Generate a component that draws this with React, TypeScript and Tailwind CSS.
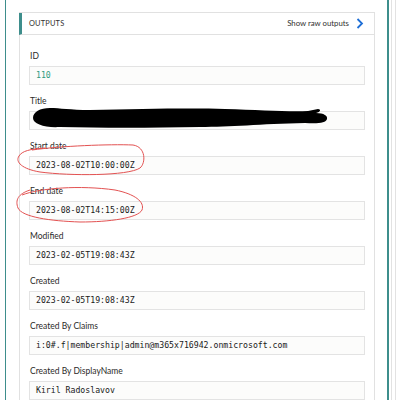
import React from 'react';

type Field = { label: string; value: string; tone?: 'id' | 'hidden' };

const fields: Field[] = [
  { label: 'ID', value: '110', tone: 'id' },
  { label: 'Title', value: '', tone: 'hidden' },
  { label: 'Start date', value: '2023-08-02T10:00:00Z' },
  { label: 'End date', value: '2023-08-02T14:15:00Z' },
  { label: 'Modified', value: '2023-02-05T19:08:43Z' },
  { label: 'Created', value: '2023-02-05T19:08:43Z' },
  { label: 'Created By Claims', value: 'i:0#.f|membership|admin@m365x716942.onmicrosoft.com' },
  { label: 'Created By DisplayName', value: 'Kiril Radoslavov' },
];

const uiFont = { fontFamily: '"Segoe UI", Lato, "Open Sans", sans-serif' };
const monoFont = { fontFamily: 'Consolas, "DejaVu Sans Mono", monospace' };

const OutputField: React.FC<{ field: Field }> = ({ field }) => (
  <div className="mb-[9px]">
    <div className="h-[14px] pl-px text-[8.5px] leading-[14px] text-[#2b2a29]" style={uiFont}>
      {field.label}
    </div>
    <div className="mt-[3px] h-[19px] border border-[#e3e3e3] bg-[#fcfcfb] pl-[6px] text-[8.2px] leading-[17px] whitespace-nowrap overflow-hidden" style={monoFont}>
      <span className={field.tone === 'id' ? 'text-[#2e9a80]' : 'text-[#1a1a1a]'}>{field.value}</span>
    </div>
  </div>
);

export default function App() {
  return (
    <div className="relative flex h-[400px] w-[397px] overflow-hidden bg-white">
      {/* left rail */}
      <div className="w-[5px]" />
      <div className="w-px bg-[#3e8e8c]" />

      {/* main */}
      <div className="flex-1 pl-[13px] pr-[12px] pt-[12px]">
        <div className="border-t border-r border-[#e1e1e1]">
          <div className="flex h-[22px] items-center justify-between border-b border-l-[3px] border-b-[#e1e1e1] border-l-[#3e8e8c] pl-[7px] pr-[10px]">
            <span className="text-[7.4px] tracking-[0.2px] text-[#323130]" style={uiFont}>OUTPUTS</span>
            <span className="flex items-center gap-[7px] text-[7.8px] text-[#323130]" style={uiFont}>
              Show raw outputs
              <svg width="8" height="11" viewBox="0 0 8 11" fill="none">
                <path d="M1.5 1 L6 5.5 L1.5 10" stroke="#1f6fd6" strokeWidth="1.8" />
              </svg>
            </span>
          </div>
          <div className="border-l border-[#e1e1e1] px-[9px] pt-[14px]">
            {fields.map((f) => (
              <OutputField key={f.label} field={f} />
            ))}
          </div>
        </div>
      </div>

      {/* right rail */}
      <div className="w-[2px] bg-[#3e8e8c]" />
      <div className="w-[2px]" />
      <div className="w-px bg-[#e2e2e2]" />
      <div className="w-[3px]" />
      <div className="w-px bg-[#e2e2e2]" />
      <div className="w-px" />

      {/* marker annotations over the screenshot */}
      <svg className="pointer-events-none absolute left-0 top-0" width="397" height="400" viewBox="0 0 397 400" fill="none">
        <path
          d="M33 118 C33 112, 40 108, 50 108 C60 108, 70 110, 90 110 C140 109, 190 108, 225 109 C260 110, 290 112, 308 111 L318 109 C321 109, 321 112, 316 113 C324 113, 328 116, 327 119 C326 123, 318 124, 305 123 C260 124, 230 127, 200 127 C150 128, 100 128, 60 127 C45 128, 33 124, 33 118 Z"
          fill="#000"
        />
        <path
          d="M32 150 C60 146, 110 144, 133 145 C146 147, 146 163, 140 168 C128 176, 70 176, 40 172 C22 169, 15 162, 19 156 C22 151, 30 149, 45 148"
          stroke="#e35252"
          strokeWidth="1"
        />
        <path
          d="M22 195 C40 188, 80 185, 115 190 C135 194, 145 202, 142 210 C138 218, 110 222, 80 222 C50 221, 22 217, 18 208 C15 200, 18 194, 30 190"
          stroke="#e35252"
          strokeWidth="1"
        />
      </svg>
    </div>
  );
}
